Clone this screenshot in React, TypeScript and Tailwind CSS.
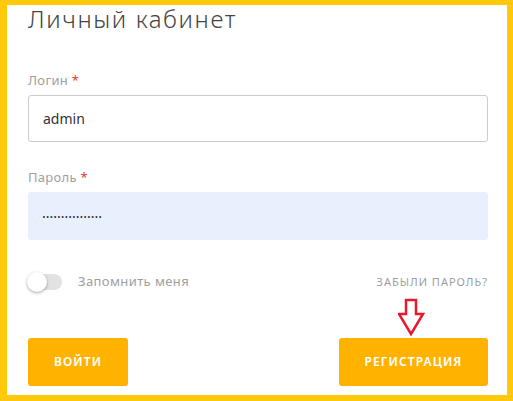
import React from "react";

const FONT = { fontFamily: '"Noto Sans", "Open Sans", sans-serif' };

function Field({ label, children }: { label: string; children: React.ReactNode }) {
  return (
    <div className="flex flex-col">
      <label className="text-[13px] leading-[16px] text-[#9e9e9e] tracking-[0.3px] mb-[7px]">
        {label} <span className="text-[#e53935]">*</span>
      </label>
      {children}
    </div>
  );
}

function ArrowDown() {
  return (
    <svg width="28" height="40" viewBox="0 0 28 40" className="block">
      <path
        d="M8 2 H18 V16 H25 L13 36 L1 16 H8 Z"
        fill="none"
        stroke="#e8192c"
        strokeWidth="2.5"
        strokeLinejoin="miter"
      />
    </svg>
  );
}

export default function App() {
  return (
    <div
      className="w-[513px] h-[401px] bg-[#ffc80a] pt-[5px] pl-[7px] pr-[6px] pb-[6px]"
      style={FONT}
    >
      <div className="h-full bg-white pl-[21px] pr-[19px] flex flex-col">
        <h1 className="text-[24px] leading-[30px] font-light text-[#444] tracking-[1.6px] -mt-[1px]">
          Личный кабинет
        </h1>

        <div className="mt-[38px]">
          <Field label="Логин">
            <input
              readOnly
              value="admin"
              className="h-[47px] rounded-[3px] border border-[#cccccc] px-[14px] text-[14px] text-[#333] outline-none"
            />
          </Field>
        </div>

        <div className="mt-[27px]">
          <Field label="Пароль">
            <input
              readOnly
              value="················"
              className="h-[48px] rounded-[3px] bg-[#e8f0fe] px-[14px] text-[14px] text-[#222] outline-none"
            />
          </Field>
        </div>

        <div className="mt-[32px] h-[20px] flex items-center justify-between">
          <div className="flex items-center gap-[16px]">
            <div className="relative w-[34px] h-[16px] rounded-full bg-[#e2e2e2]">
              <div className="absolute -left-[1px] -top-[2px] w-[20px] h-[20px] rounded-full bg-white shadow-[0_1px_3px_rgba(0,0,0,0.35)]" />
            </div>
            <span className="text-[13px] text-[#a0a0a0] tracking-[0.4px]">Запомнить меня</span>
          </div>
          <span className="text-[11px] tracking-[1px] text-[#9e9e9e] uppercase">
            Забыли пароль?
          </span>
        </div>

        <div className="flex justify-end pr-[62px] mt-[6px]">
          <ArrowDown />
        </div>

        <div className="flex justify-between">
          <button className="w-[100px] h-[48px] rounded-[3px] bg-[#ffb300] text-white text-[12px] font-semibold tracking-[1.1px]">
            ВОЙТИ
          </button>
          <button className="w-[149px] h-[48px] rounded-[3px] bg-[#ffb300] text-white text-[12px] font-semibold tracking-[1.1px]">
            РЕГИСТРАЦИЯ
          </button>
        </div>
      </div>
    </div>
  );
}
